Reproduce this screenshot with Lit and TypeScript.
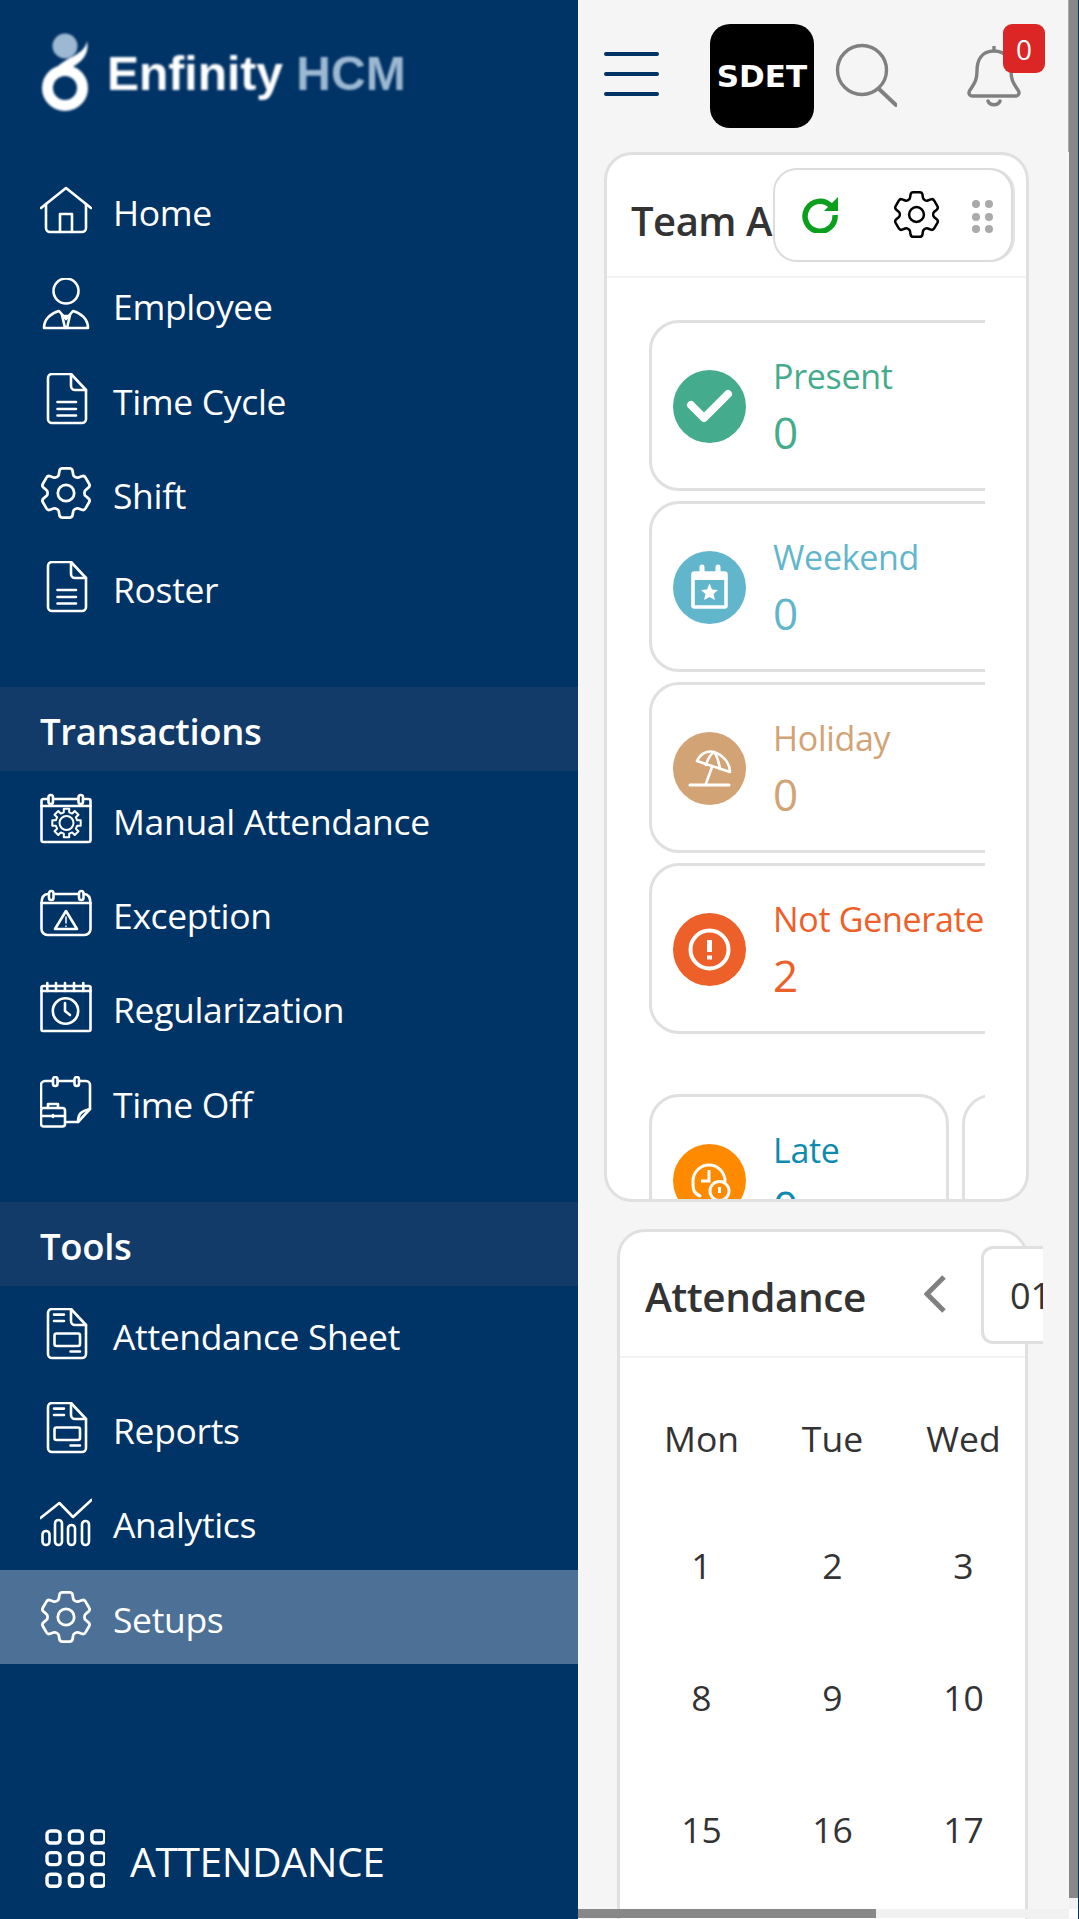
import { LitElement, css, html, svg } from "lit";
import { customElement } from "lit/decorators.js";

const GEAR =
  "M9.594 3.94c.09-.542.56-.94 1.11-.94h2.593c.55 0 1.02.398 1.11.94l.213 1.281c.063.374.313.686.645.87.074.04.147.083.22.127.325.196.72.257 1.075.124l1.217-.456a1.125 1.125 0 0 1 1.37.49l1.296 2.247a1.125 1.125 0 0 1-.26 1.431l-1.003.827c-.293.241-.438.613-.43.992a7.723 7.723 0 0 1 0 .255c-.008.378.137.75.43.991l1.004.827c.424.35.534.955.26 1.43l-1.298 2.247a1.125 1.125 0 0 1-1.369.491l-1.217-.456c-.355-.133-.75-.072-1.076.124a6.47 6.47 0 0 1-.22.128c-.331.183-.581.495-.644.869l-.213 1.281c-.09.543-.56.94-1.11.94h-2.594c-.55 0-1.019-.398-1.11-.94l-.213-1.281c-.062-.374-.312-.686-.644-.87a6.52 6.52 0 0 1-.22-.127c-.325-.196-.72-.257-1.076-.124l-1.217.456a1.125 1.125 0 0 1-1.369-.49l-1.297-2.247a1.125 1.125 0 0 1 .26-1.431l1.004-.827c.292-.24.437-.613.43-.991a6.932 6.932 0 0 1 0-.255c.007-.38-.138-.751-.43-.992l-1.004-.827a1.125 1.125 0 0 1-.26-1.43l1.297-2.247a1.125 1.125 0 0 1 1.37-.491l1.216.456c.356.133.751.072 1.076-.124.072-.044.146-.086.22-.128.332-.183.582-.495.644-.869l.214-1.28Z";

// square toothed cog used by the small calendar icon
function cog(cx: number, cy: number, r1: number, r2: number, teeth: number) {
  const pts: string[] = [];
  const step = (Math.PI * 2) / teeth;
  for (let i = 0; i < teeth; i++) {
    const a = i * step;
    const w = step * 0.24;
    const at = (r: number, t: number) =>
      `${(cx + r * Math.cos(t)).toFixed(1)} ${(cy + r * Math.sin(t)).toFixed(1)}`;
    pts.push(at(r1, a - w * 1.3), at(r2, a - w), at(r2, a + w), at(r1, a + w * 1.3));
  }
  return "M" + pts.join("L") + "Z";
}

const gearIcon = (size = 52) => html`<svg class="ico" width=${size} height=${size} viewBox="2.5 2.5 19 19" fill="none" stroke="currentColor" stroke-width="1">
  <path d=${GEAR} stroke-linejoin="round" /><circle cx="12" cy="12" r="3" />
</svg>`;

const icon = (body: unknown) => html`<svg class="ico" width="52" height="52" viewBox="0 0 52 52" fill="none" stroke="currentColor" stroke-width="2.6" stroke-linecap="round" stroke-linejoin="round">${body}</svg>`;

const docOutline = svg`<path d="M12 1H31L46 17V46a4 4 0 0 1-4 4H12a4 4 0 0 1-4-4V5a4 4 0 0 1 4-4Z" /><path d="M31 1V13a4 4 0 0 0 4 4H46" />`;

const icons: Record<string, unknown> = {
  home: icon(svg`<path d="M1 24 26 4 51 24" /><path d="M6 20V44a4 4 0 0 0 4 4H42a4 4 0 0 0 4-4V20" /><path d="M20 48V30H32V48" />`),
  employee: icon(svg`<circle cx="26" cy="13" r="12.5" /><path d="M4 50C4 41 11 35 19 33L26 41 33 33C41 35 48 41 48 50Z" /><path d="M22 37 25 50M30 37 27 50M23 38H29" />`),
  doc: icon(svg`${docOutline}<path d="M17.5 29H36M17.5 36H36M17.5 42.5H36" />`),
  gear: gearIcon(),
  manual: icon(svg`<rect x="1.5" y="6" width="49" height="43" rx="2" /><path d="M1.5 13H50.5" /><rect x="8.5" y="2" width="4.5" height="9" rx="2.2" fill="#003366" /><rect x="38.5" y="2" width="4.5" height="9" rx="2.2" fill="#003366" /><path d=${cog(26.5, 30, 11, 14.5, 8)} stroke-width="2" /><circle cx="26.5" cy="30" r="7" stroke-width="2" />`),
  exception: icon(svg`<path d="M1.5 17C1.5 11 3 7 8 7H44C49 7 50.5 11 50.5 17V42a6 6 0 0 1-6 6H7.5a6 6 0 0 1-6-6Z" /><path d="M1.5 16H50.5" /><rect x="9" y="4" width="4.5" height="9" rx="2.2" fill="#003366" /><rect x="39" y="4" width="4.5" height="9" rx="2.2" fill="#003366" /><path d="M26 24 15 42H37Z" /><path d="M26 30V36M26 39V39.5" stroke-width="1.5" />`),
  regular: icon(svg`<rect x="1.5" y="5" width="49" height="45" rx="1.5" /><path d="M1.5 10H50.5" /><path d="M7.3 2V10M16 2V10M25 2V10M34 2V10M43.3 2V10" /><circle cx="25.5" cy="30" r="12.7" /><path d="M25 22V30L30 34" />`),
  timeoff: icon(svg`<path d="M1 31V9a4 4 0 0 1 4-4H46a4 4 0 0 1 4 4V33L38 46H27" /><path d="M38 46C38 38 41 35 50 33" /><rect x="13" y="1" width="4.5" height="9" rx="2.2" fill="#003366" /><rect x="34.5" y="1" width="4.5" height="9" rx="2.2" fill="#003366" /><rect x="1" y="32" width="24" height="18.5" rx="2.5" fill="#003366" /><path d="M1 40H25M8 32V28H18V32M13 39V41" />`),
  sheet: icon(svg`${docOutline}<path d="M14 6.6H24M14 13H24M30.5 43.5H40" /><rect x="14.5" y="25.5" width="25.5" height="12.5" rx="2" />`),
  analytics: icon(svg`<path d="M0.5 22 19.4 7 33 21 51.5 4" /><rect x="2.5" y="35" width="7" height="14" rx="3.5" /><rect x="15" y="24" width="7" height="25" rx="3.5" /><rect x="28" y="29" width="7" height="20" rx="3.5" /><rect x="42" y="25" width="7" height="24" rx="3.5" />`),
};

const group1 = [
  ["Home", "home"],
  ["Employee", "employee"],
  ["Time Cycle", "doc"],
  ["Shift", "gear"],
  ["Roster", "doc"],
];
const group2 = [
  ["Manual Attendance", "manual"],
  ["Exception", "exception"],
  ["Regularization", "regular"],
  ["Time Off", "timeoff"],
];
const group3 = [
  ["Attendance Sheet", "sheet"],
  ["Reports", "sheet"],
  ["Analytics", "analytics"],
  ["Setups", "gear"],
];

const stats = [
  {
    label: "Present",
    value: "0",
    color: "#44ac8c",
    bg: "#44ac8c",
    glyph: svg`<path d="M18 35 31 48 55 24" stroke="#fff" stroke-width="8" stroke-linecap="round" stroke-linejoin="round" fill="none" />`,
  },
  {
    label: "Weekend",
    value: "0",
    color: "#62b6cc",
    bg: "#62b6cc",
    glyph: svg`<rect x="20" y="22" width="33" height="34" rx="1.5" fill="none" stroke="#fff" stroke-width="3.6" /><path d="M20 26H53" stroke="#fff" stroke-width="6" /><path d="M29 16V23M45 16V23" stroke="#fff" stroke-width="5" stroke-linecap="round" /><path d="M36.5 32.5 39 38.5 45 39 40.5 43 42 49 36.5 46 31 49 32.5 43 28 39 34 38.5Z" fill="#fff" />`,
  },
  {
    label: "Holiday",
    value: "0",
    color: "#d2a375",
    bg: "#d2a375",
    glyph: svg`<g fill="none" stroke="#fff" stroke-width="2.6" stroke-linejoin="round" stroke-linecap="round"><path d="M24 29C27 22 34 18 41 20C50 23 57 31 57 40Z" /><path d="M33 33C35 26 38 22 41 20C45 25 46 31 47 37" /><path d="M39 35 32.5 53" /><path d="M17 53H56" stroke-width="3.2" /></g>`,
  },
  {
    label: "Not Generated",
    value: "2",
    color: "#ed6029",
    bg: "#ed6029",
    glyph: svg`<circle cx="36.5" cy="36.5" r="19" fill="none" stroke="#fff" stroke-width="4" /><path d="M36.5 27V39" stroke="#fff" stroke-width="5" /><path d="M36.5 42.5V46.5" stroke="#fff" stroke-width="5" />`,
  },
];

const lateGlyph = svg`<path d="M27 52C20 49 20 45 20 37a16 16 0 1 1 32 0" fill="none" stroke="#fff" stroke-width="3" stroke-linecap="round" /><path d="M36 26V37H28" fill="none" stroke="#fff" stroke-width="3" /><circle cx="46.5" cy="47" r="9.5" fill="#ff8a00" stroke="#fff" stroke-width="3" /><path d="M46.5 43V49" stroke="#fff" stroke-width="3" />`;

const calendar = [
  ["Mon", "Tue", "Wed"],
  ["1", "2", "3"],
  ["8", "9", "10"],
  ["15", "16", "17"],
];

@customElement("app-root")
export class AppRoot extends LitElement {
  static styles = css`
    :host {
      display: block;
      position: relative;
      width: 1079px;
      height: 1919px;
      overflow: hidden;
      background: #003366;
      font-family: "Open Sans", "Noto Sans", sans-serif;
    }
    .shell {
      display: flex;
      height: 1919px;
    }
    .side {
      width: 578px;
      flex: none;
      display: flex;
      flex-direction: column;
      background: #003366;
      color: #fff;
      z-index: 2;
    }
    .logo {
      height: 163px;
      flex: none;
      display: flex;
      align-items: flex-start;
      padding: 30px 0 0 42px;
      box-sizing: border-box;
      gap: 17px;
      filter: blur(0.9px);
    }
    .logo-text {
      font: 700 48px/1 "Liberation Sans", Arial, sans-serif;
      margin-top: 20px;
      color: #fff;
      white-space: nowrap;
    }
    .logo-text span {
      color: #9db8d2;
    }
    .row {
      height: 94.3px;
      box-sizing: border-box;
      padding: 4px 0 0 40px;
      display: flex;
      align-items: center;
      gap: 21px;
      font-size: 35.5px;
      letter-spacing: -0.35px;
      flex: none;
    }
    .ico {
      flex: none;
      margin-top: -4px;
    }
    .row.active {
      background: #4d7097;
    }
    .band {
      height: 84px;
      box-sizing: border-box;
      flex: none;
      display: flex;
      align-items: center;
      padding: 4px 0 0 40px;
      background: #133b69;
      font-size: 36.5px;
      font-weight: 600;
      letter-spacing: -0.35px;
      margin-top: 53px;
    }
    .tools {
      margin-top: 1px;
    }
    .foot {
      margin-top: auto;
      height: 59px;
      margin-bottom: 31px;
      display: flex;
      align-items: center;
      gap: 25px;
      padding-left: 45px;
      font-size: 40.8px;
      letter-spacing: -0.4px;
    }
    .foot span {
      padding-top: 4px;
    }
    .main {
      flex: 1;
      min-width: 0;
      margin-right: 1px;
      background: #f5f5f5;
      overflow: hidden;
      color: #333;
    }
    .top {
      height: 152px;
      display: flex;
      align-items: flex-start;
      padding-left: 26px;
      box-sizing: border-box;
    }
    .burger {
      width: 55px;
      margin-top: 52px;
      display: flex;
      flex-direction: column;
      gap: 16.5px;
      flex: none;
    }
    .burger i {
      display: block;
      height: 3.5px;
      border-radius: 2px;
      background: #003366;
    }
    .brand {
      width: 104px;
      height: 104px;
      margin: 24px 0 0 51px;
      flex: none;
      border-radius: 20px;
      background: #000;
      color: #fff;
      display: flex;
      align-items: center;
      justify-content: center;
      font: 700 31px/1 "DejaVu Sans", sans-serif;
    }
    .search {
      margin: 43px 0 0 21px;
      flex: none;
    }
    .bell-wrap {
      position: relative;
      margin: 46px 0 0 70px;
      width: 54px;
      height: 62px;
      flex: none;
    }
    .badge {
      position: absolute;
      left: 36px;
      top: -22px;
      width: 42px;
      height: 49px;
      border-radius: 9px;
      background: #dc2626;
      color: #fff;
      display: flex;
      align-items: center;
      justify-content: center;
      font-size: 28px;
    }
    .card {
      position: relative;
      box-sizing: border-box;
      background: #fff;
      border: 3px solid #e0e0e0;
      border-radius: 28px;
    }
    .team {
      margin-left: 26px;
      width: 425px;
      height: 1050px;
      overflow: hidden;
    }
    .head {
      height: 123px;
      box-sizing: border-box;
      border-bottom: 2px solid #f3f3f3;
      display: flex;
      align-items: center;
      padding: 10px 0 0 24px;
      font-size: 40px;
      font-weight: 600;
      letter-spacing: -0.5px;
      white-space: nowrap;
    }
    .tools-pop {
      position: absolute;
      left: 166px;
      top: 13px;
      width: 240px;
      height: 94px;
      box-sizing: border-box;
      background: #fff;
      border: 2px solid #dcdcdc;
      border-radius: 24px;
      box-shadow: 2px 0 0 0 #e4e4e4;
    }
    .pop-refresh {
      position: absolute;
      left: 27px;
      top: 27px;
    }
    .pop-gear {
      position: absolute;
      left: 118px;
      top: 21px;
      color: #000;
      line-height: 0;
    }
    .pop-gear .ico {
      margin: 0;
    }
    .dots {
      position: absolute;
      left: 197px;
      top: 30px;
      display: grid;
      grid-template-columns: 8px 8px;
      column-gap: 5px;
      row-gap: 4.5px;
    }
    .dots i {
      width: 8px;
      height: 8px;
      border-radius: 50%;
      background: #aaa;
    }
    .stats {
      margin: 42px 0 0 42px;
      width: 336px;
      overflow: hidden;
      display: flex;
      flex-direction: column;
      gap: 10px;
    }
    .stat {
      flex: none;
      box-sizing: border-box;
      width: 420px;
      height: 171px;
      display: flex;
      align-items: center;
      gap: 27px;
      padding-left: 21px;
      background: #fff;
      border: 3px solid #e0e0e0;
      border-radius: 30px;
    }
    .circle {
      width: 73px;
      height: 73px;
      flex: none;
      border-radius: 50%;
      margin-top: 1px;
    }
    .circle svg {
      display: block;
    }
    .stat-text {
      padding-top: 4px;
      white-space: nowrap;
      letter-spacing: -0.3px;
    }
    .stat-label {
      font-size: 34px;
      line-height: 44px;
    }
    .stat-value {
      font-size: 44px;
      line-height: 60px;
      margin-top: 4px;
    }
    .late-row {
      flex: none;
      display: flex;
      gap: 13px;
      margin-top: 50px;
    }
    .late-row .stat {
      width: 300px;
    }
    .cal {
      margin: 27px 0 0 39px;
      width: 411px;
      height: 800px;
    }
    .cal-head {
      height: 126px;
      box-sizing: border-box;
      border-bottom: 2px solid #f3f3f3;
      display: flex;
      align-items: center;
      padding-left: 25px;
      font-size: 40.5px;
      font-weight: 600;
      letter-spacing: -0.5px;
    }
    .cal-head span {
      padding-top: 4px;
    }
    .chev {
      margin-left: 58px;
      flex: none;
    }
    .date {
      margin: 2px -18px 0 auto;
      width: 62px;
      height: 98px;
      flex: none;
      box-sizing: border-box;
      background: #fff;
      border: 3px solid #e0e0e0;
      border-right: none;
      border-radius: 12px 0 0 12px;
      overflow: hidden;
      display: flex;
      align-items: center;
      padding-left: 26px;
      font-size: 36px;
      font-weight: 400;
      letter-spacing: 0;
    }
    .cal-grid {
      display: grid;
      grid-template-columns: repeat(3, 131px);
      grid-template-rows: 123px repeat(3, 132px);
      padding: 18px 0 0 16px;
      font-size: 35.5px;
      text-align: center;
      align-items: center;
    }
    .vbar {
      position: absolute;
      left: 1069px;
      top: 0;
      width: 9px;
      height: 1898px;
      background: #888;
      z-index: 3;
    }
    .vbar-edge {
      position: absolute;
      left: 1068px;
      top: 0;
      width: 1px;
      height: 152px;
      background: #aaa;
      z-index: 3;
    }
    .vtrack {
      position: absolute;
      left: 1069px;
      top: 1898px;
      width: 9px;
      height: 11px;
      background: #f1f1f1;
      z-index: 3;
    }
    .corner {
      position: absolute;
      left: 1069px;
      top: 1909px;
      width: 9px;
      height: 9px;
      background: #fff;
      z-index: 3;
    }
    .hbar {
      position: absolute;
      left: 578px;
      top: 1909px;
      width: 491px;
      height: 9px;
      background: #f1f1f1;
      z-index: 3;
    }
    .hbar i {
      display: block;
      width: 298px;
      height: 9px;
      background: #888;
    }
  `;

  private renderRow(item: string[], active = false) {
    return html`<div class="row ${active ? "active" : ""}">${icons[item[1]]}<span>${item[0]}</span></div>`;
  }

  private renderStat(s: { label: string; value: string; color: string; bg: string; glyph: unknown }) {
    return html`<div class="stat" style="color:${s.color}">
      <div class="circle" style="background:${s.bg}">
        <svg width="73" height="73" viewBox="0 0 73 73">${s.glyph}</svg>
      </div>
      <div class="stat-text">
        <div class="stat-label">${s.label}</div>
        <div class="stat-value">${s.value}</div>
      </div>
    </div>`;
  }

  private renderSidebar() {
    return html`<aside class="side">
      <div class="logo">
        <svg width="48" height="82" viewBox="0 0 48 82" fill="none">
          <circle cx="23" cy="16" r="12.5" fill="#9db8d2" />
          <path d="M45 11C48 25 38 34 26 39L8 47C12 37 22 31 30 27C38 23 44 18 45 11Z" fill="#fff" />
          <circle cx="23" cy="58" r="17.5" stroke="#fff" stroke-width="11" />
        </svg>
        <div class="logo-text">Enfinity <span>HCM</span></div>
      </div>
      ${group1.map((i) => this.renderRow(i))}
      <div class="band">Transactions</div>
      ${group2.map((i) => this.renderRow(i))}
      <div class="band">Tools</div>
      <div class="tools">
        ${group3.map((i) => this.renderRow(i, i[0] === "Setups"))}
      </div>
      <div class="foot">
        <svg width="60" height="59" viewBox="0 0 60 59" fill="none" stroke="#fff" stroke-width="3.4">
          ${[0, 1, 2].map((r) =>
            [0, 1, 2].map(
              (c) => svg`<rect x=${2 + c * 22.4} y=${2 + r * 21.6} width="13" height="12" rx="3.5" />`
            )
          )}
        </svg>
        <span>ATTENDANCE</span>
      </div>
    </aside>`;
  }

  render() {
    return html`<div class="shell">
        ${this.renderSidebar()}
        <main class="main">
          <div class="top">
            <div class="burger"><i></i><i></i><i></i></div>
            <div class="brand">SDET</div>
            <svg class="search" width="62" height="66" viewBox="0 0 62 66" fill="none" stroke="#808080" stroke-width="3.4" stroke-linecap="round">
              <circle cx="27" cy="27" r="24.5" />
              <path d="M44 46 61 62" stroke-width="4" />
            </svg>
            <div class="bell-wrap">
              <svg width="54" height="62" viewBox="0 0 54 62" fill="none" stroke="#808080" stroke-width="3.4" stroke-linecap="round" stroke-linejoin="round">
                <path d="M27 5C14 5 10 15 10 25C10 35 7 38 3 44C1 47 2 50 6 50H48C52 50 53 47 51 44C47 38 44 35 44 25C44 15 40 5 27 5Z" />
                <path d="M27 1V4M21 55C23 60 31 60 33 55" />
              </svg>
              <div class="badge">0</div>
            </div>
          </div>

          <section class="card team">
            <div class="head">Team A</div>
            <div class="tools-pop">
              <svg class="pop-refresh" width="36" height="36" viewBox="0 0 36 36" fill="none">
                <path d="M29 9A15 15 0 1 0 33 18" stroke="#0aa01e" stroke-width="5.5" />
                <path d="M36 0V14H22Z" fill="#0aa01e" />
              </svg>
              <div class="pop-gear">${gearIcon(47)}</div>
              <div class="dots"><i></i><i></i><i></i><i></i><i></i><i></i></div>
            </div>
            <div class="stats">
              ${stats.map((s) => this.renderStat(s))}
              <div class="late-row">
                ${this.renderStat({ label: "Late", value: "0", color: "#0d8aad", bg: "#ff8a00", glyph: lateGlyph })}
                <div class="stat"></div>
              </div>
            </div>
          </section>

          <section class="card cal">
            <div class="cal-head">
              <span>Attendance</span>
              <svg class="chev" width="22" height="38" viewBox="0 0 22 38" fill="none" stroke="#808080" stroke-width="5">
                <path d="M20 2 3 19 20 36" />
              </svg>
              <div class="date">01</div>
            </div>
            <div class="cal-grid">
              ${calendar.flat().map((d) => html`<div>${d}</div>`)}
            </div>
          </section>
        </main>
      </div>
      <div class="vbar-edge"></div>
      <div class="vbar"></div>
      <div class="vtrack"></div>
      <div class="corner"></div>
      <div class="hbar"><i></i></div>`;
  }
}
